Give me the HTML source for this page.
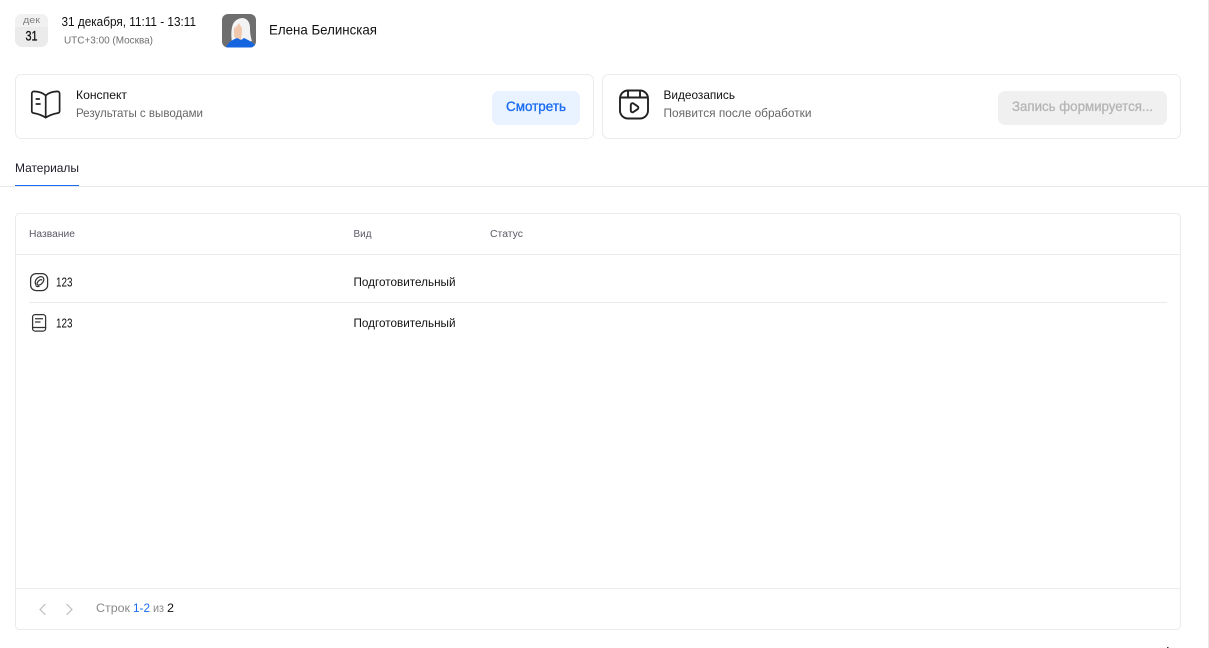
<!DOCTYPE html>
<html lang="ru"><head><meta charset="utf-8"><title>Занятие</title>
<style>
html,body{margin:0;padding:0;background:#fff;width:1209px;height:648px;overflow:hidden}
svg{display:block}
text{font-family:"Liberation Sans",sans-serif;fill:#111}
</style></head><body>
<svg width="1209" height="648" viewBox="0 0 1209 648" xmlns="http://www.w3.org/2000/svg">
<defs><clipPath id="av"><rect x="222" y="14" width="34" height="33.500" rx="6"/></clipPath></defs>
<rect x="1208" y="0" width="1" height="648" fill="#e8e8e8"/>
<!-- date -->
<rect x="15" y="14" width="33" height="33" rx="7" fill="#ebebeb"/>
<path d="M15 27V21a7 7 0 0 1 7-7h19a7 7 0 0 1 7 7v6z" fill="#f1f1f1"/>
<text x="23" y="23" font-size="9.500" style="fill:#808080" textLength="17" lengthAdjust="spacingAndGlyphs">дек</text>
<text x="25.500" y="40.500" font-size="14" style="stroke:#111;stroke-width:.3" textLength="12" lengthAdjust="spacingAndGlyphs">31</text>
<text x="61.500" y="26" font-size="13" textLength="134.500" lengthAdjust="spacingAndGlyphs">31 декабря, 11:11 - 13:11</text>
<text x="64" y="43.500" font-size="10.500" style="fill:#6f6f6f" textLength="89" lengthAdjust="spacingAndGlyphs">UTC+3:00 (Москва)</text>
<!-- avatar -->
<g clip-path="url(#av)">
<rect x="222" y="14" width="34" height="34" fill="#6e6e6e"/>
<path d="M232 42c-1-6-1-13 1-18 2-4 6-6 10-6 5 1 7 5 7 10 0 6 1 10 2 13l-8 2-8-1z" fill="#f3f3f3"/>
<path d="M234 28c2-1 4-3 5-5 1 2 2 4 3 5 0 4 0 7-1 10l1 3h-5l0-3c-2 0-3-1-3-3z" fill="#f0c8ae"/>
<path d="M226 48c1-5 6-8 11-10l4 2 3-2c4 2 9 4 12 8v2z" fill="#1565e0"/>
</g>
<text x="269" y="34.500" font-size="14" textLength="108" lengthAdjust="spacingAndGlyphs">Елена Белинская</text>
<!-- card 1 -->
<rect x="15.500" y="74.500" width="578" height="64" rx="6" fill="#fff" stroke="#ebebeb"/>
<g fill="none" stroke="#222" stroke-width="1.700" stroke-linejoin="round" stroke-linecap="round">
<path d="M45.700 95.500C43 93 38 91.600 34 91.400c-1.300 0-2.200.9-2.200 2.100v17.600c0 1 .6 1.700 1.500 1.900 4.500.8 9 2.300 12.400 4.700 3.400-2.400 7.900-3.900 12.400-4.700.9-.2 1.500-.9 1.500-1.900V93.500c0-1.200-.9-2.100-2.200-2.100C53.400 91.600 48.400 93 45.700 95.500zV117.500"/>
<path d="M36.300 99h3M36.300 104h3.700"/>
</g>
<text x="76" y="99" font-size="12" textLength="51" lengthAdjust="spacingAndGlyphs">Конспект</text>
<text x="76" y="117" font-size="12" style="fill:#666" textLength="127" lengthAdjust="spacingAndGlyphs">Результаты с выводами</text>
<rect x="492" y="91" width="88" height="34" rx="7" fill="#e8f3ff"/>
<text x="506" y="111" font-size="14" style="fill:#1b6cf2;stroke:#1b6cf2;stroke-width:.35" textLength="60" lengthAdjust="spacingAndGlyphs">Смотреть</text>
<!-- card 2 -->
<rect x="602.500" y="74.500" width="578" height="64" rx="6" fill="#fff" stroke="#ebebeb"/>
<g fill="none" stroke="#222" stroke-width="1.900" stroke-linejoin="round" stroke-linecap="round">
<rect x="620" y="90.500" width="28" height="28" rx="8"/>
<path d="M620.500 97.500h27M628 91v6.500M640 91v6.500"/>
<path d="M630.800 105c0-1.400 1.400-2.200 2.600-1.500l4.200 2.800c1 .7 1 2.200 0 2.900l-4.200 2.800c-1.200.7-2.600-.1-2.600-1.500z"/>
</g>
<text x="663.500" y="99" font-size="12" textLength="71.500" lengthAdjust="spacingAndGlyphs">Видеозапись</text>
<text x="663.500" y="117" font-size="12" style="fill:#666" textLength="148" lengthAdjust="spacingAndGlyphs">Появится после обработки</text>
<rect x="998" y="91" width="169" height="34" rx="7" fill="#f0f0f0"/>
<text x="1012" y="111" font-size="14" style="fill:#b5b5b5;stroke:#b5b5b5;stroke-width:.3" textLength="141" lengthAdjust="spacingAndGlyphs">Запись формируется...</text>
<!-- tabs -->
<text x="15" y="172" font-size="12" style="fill:#1c1c28" textLength="64" lengthAdjust="spacingAndGlyphs">Материалы</text>
<rect x="0" y="186" width="1208" height="1" fill="#e8e8e8"/>
<rect x="15" y="185" width="64" height="1" fill="#1b6cf2"/>
<!-- table -->
<rect x="15.500" y="213.500" width="1165" height="416" rx="4" fill="#fff" stroke="#ebebeb"/>
<rect x="16" y="254" width="1164" height="1" fill="#ebebeb"/>
<rect x="16" y="588" width="1164" height="1" fill="#ebebeb"/>
<rect x="29" y="302" width="1138" height="1" fill="#ebebeb"/>
<text x="29" y="237" font-size="10" style="fill:#5a5a66" textLength="46" lengthAdjust="spacingAndGlyphs">Название</text>
<text x="353.500" y="237" font-size="10" style="fill:#5a5a66" textLength="18" lengthAdjust="spacingAndGlyphs">Вид</text>
<text x="490" y="237" font-size="10" style="fill:#5a5a66" textLength="33" lengthAdjust="spacingAndGlyphs">Статус</text>
<g fill="none" stroke="#333" stroke-width="1.250" stroke-linecap="round" stroke-linejoin="round">
<rect x="30.600" y="273.600" width="17" height="17" rx="5.500"/>
<path d="M35.700 284.500c-1.200-2.200-.2-5 2-6.600 2.500-1.800 5-1.500 5.800.2.800 1.600 0 4-2 5.700-1.700 1.400-3.700 1.800-4.300.8-.6-1 .5-3 2-4.200 1-.8 2-1 2.500-.5"/>
<path d="M36 285.800c.7.700 1.800 1 3 .6"/>
<rect x="32.600" y="314.600" width="13" height="16.500" rx="2.500"/>
<path d="M32.600 327.500h13M35.500 318.800h7M35.500 322h4.500"/>
</g>
<text x="56" y="286.500" font-size="13" textLength="16.500" lengthAdjust="spacingAndGlyphs">123</text>
<text x="56" y="327.500" font-size="13" textLength="16.500" lengthAdjust="spacingAndGlyphs">123</text>
<text x="353.500" y="286" font-size="12" textLength="102" lengthAdjust="spacingAndGlyphs">Подготовительный</text>
<text x="353.500" y="327" font-size="12" textLength="102" lengthAdjust="spacingAndGlyphs">Подготовительный</text>
<!-- pagination -->
<g fill="none" stroke="#c4c4c4" stroke-width="1.300" stroke-linecap="round" stroke-linejoin="round">
<path d="M45 604.500l-5 5 5 5"/><path d="M67 604.500l5 5-5 5"/>
</g>
<text x="96" y="612" font-size="12" style="fill:#8a8a8a" textLength="34" lengthAdjust="spacingAndGlyphs">Строк</text>
<text x="133" y="612" font-size="12" style="fill:#1b6cf2" textLength="17" lengthAdjust="spacingAndGlyphs">1-2</text>
<text x="153" y="612" font-size="12" style="fill:#8a8a8a" textLength="11" lengthAdjust="spacingAndGlyphs">из</text>
<text x="167" y="612" font-size="12" textLength="7" lengthAdjust="spacingAndGlyphs">2</text>
<rect x="1167" y="647" width="1.500" height="1" fill="#333"/>
</svg>
</body></html>
